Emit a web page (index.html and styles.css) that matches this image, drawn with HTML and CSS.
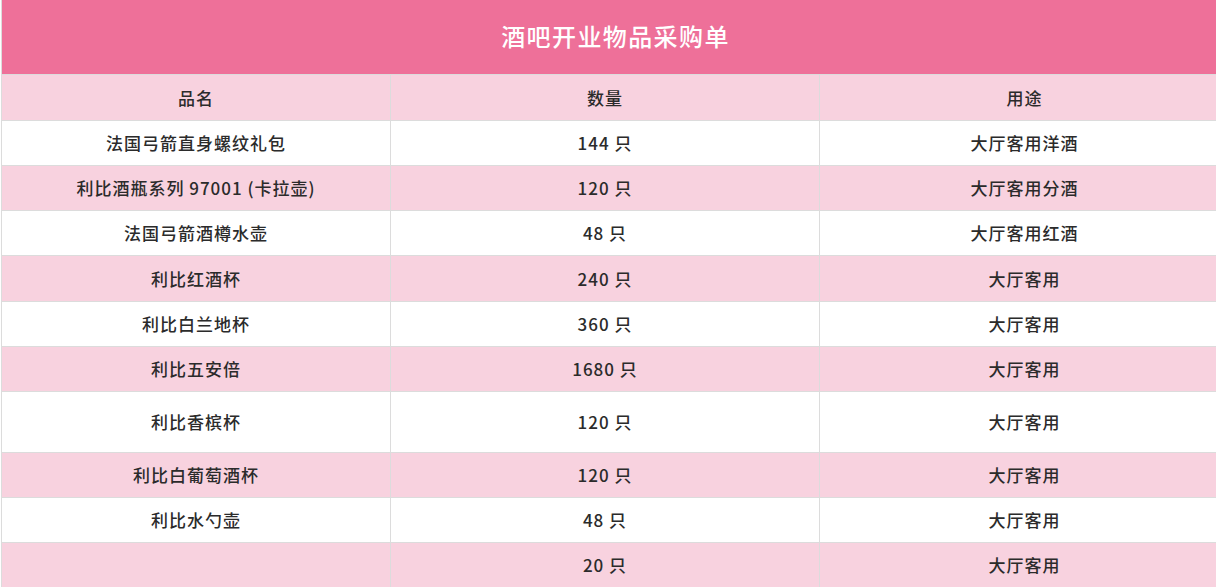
FILE: index.html
```html
<!DOCTYPE html>
<html lang="zh-CN">
<head>
<meta charset="utf-8">
<title>酒吧开业物品采购单</title>
<link rel="stylesheet" href="styles.css">
</head>
<body>
<div class="wrap">
<table class="sheet">
  <colgroup>
    <col class="c1">
    <col class="c2">
    <col class="c3">
  </colgroup>
  <thead>
    <tr class="title-row"><th colspan="3" class="title">酒吧开业物品采购单</th></tr>
    <tr class="head-row"><th>品名</th><th>数量</th><th>用途</th></tr>
  </thead>
  <tbody>
    <tr><td>法国弓箭直身螺纹礼包</td><td>144 只</td><td>大厅客用洋酒</td></tr>
    <tr class="alt"><td>利比酒瓶系列 97001 (卡拉壶)</td><td>120 只</td><td>大厅客用分酒</td></tr>
    <tr><td>法国弓箭酒樽水壶</td><td>48 只</td><td>大厅客用红酒</td></tr>
    <tr class="alt plus"><td>利比红酒杯</td><td>240 只</td><td>大厅客用</td></tr>
    <tr><td>利比白兰地杯</td><td>360 只</td><td>大厅客用</td></tr>
    <tr class="alt"><td>利比五安倍</td><td>1680 只</td><td>大厅客用</td></tr>
    <tr class="tall"><td>利比香槟杯</td><td>120 只</td><td>大厅客用</td></tr>
    <tr class="alt"><td>利比白葡萄酒杯</td><td>120 只</td><td>大厅客用</td></tr>
    <tr><td>利比水勺壶</td><td>48 只</td><td>大厅客用</td></tr>
    <tr class="alt"><td></td><td>20 只</td><td>大厅客用</td></tr>
  </tbody>
</table>
</div>
</body>
</html>
```
FILE: styles.css
```css
html, body {
  margin: 0;
  padding: 0;
  background: #ffffff;
}
.wrap {
  padding-left: 1px;
}
.sheet {
  border-collapse: collapse;
  table-layout: fixed;
  width: 1228px;
  font-family: "Noto Sans CJK SC", "Noto Sans", sans-serif;
  color: #2b2b2b;
}
.c1 { width: 389px; }
.c2 { width: 429px; }
.c3 { width: 410px; }
.sheet th, .sheet td {
  border: 1px solid #dcdcdc;
  text-align: center;
  vertical-align: middle;
  padding: 0;
  font-size: 17px;
  font-weight: 500;
  letter-spacing: 1px;
}
.title-row { height: 74px; }
.sheet th.title {
  background: #ee7099;
  color: #ffffff;
  font-size: 24px;
  font-weight: 500;
  letter-spacing: 1.4px;
  border-top: none;
  padding-bottom: 2px;
}
.head-row { height: 46px; }
.head-row th { background: #f8d2df; }
.sheet tbody tr { height: 45px; }
.sheet tbody tr.plus { height: 46px; }
.sheet tbody tr.alt td { background: #f8d2df; }
.sheet tbody tr.tall { height: 61px; }
```
